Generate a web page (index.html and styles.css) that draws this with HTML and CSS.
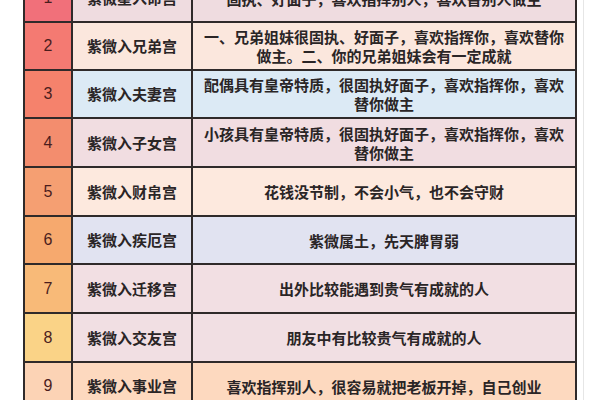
FILE: index.html
```html
<!DOCTYPE html>
<html lang="zh-CN">
<head>
<meta charset="utf-8">
<title>紫微星入十二宫</title>
<link rel="stylesheet" href="styles.css">
</head>
<body>
<div class="page">
  <div class="table">
    <div class="row r1"><div class="num">1</div><div class="name">紫微星入命宫</div><div class="desc">固执、好面子，喜欢指挥别人，喜欢替别人做主</div></div>
    <div class="row r2"><div class="num">2</div><div class="name">紫微入兄弟宫</div><div class="desc">一、兄弟姐妹很固执、好面子，喜欢指挥你，喜欢替你做主。二、你的兄弟姐妹会有一定成就</div></div>
    <div class="row r3"><div class="num">3</div><div class="name">紫微入夫妻宫</div><div class="desc">配偶具有皇帝特质，很固执好面子，喜欢指挥你，喜欢替你做主</div></div>
    <div class="row r4"><div class="num">4</div><div class="name">紫微入子女宫</div><div class="desc">小孩具有皇帝特质，很固执好面子，喜欢指挥你，喜欢替你做主</div></div>
    <div class="row r5"><div class="num">5</div><div class="name">紫微入财帛宫</div><div class="desc">花钱没节制，不会小气，也不会守财</div></div>
    <div class="row r6"><div class="num">6</div><div class="name">紫微入疾厄宫</div><div class="desc">紫微属土，先天脾胃弱</div></div>
    <div class="row r7"><div class="num">7</div><div class="name">紫微入迁移宫</div><div class="desc">出外比较能遇到贵气有成就的人</div></div>
    <div class="row r8"><div class="num">8</div><div class="name">紫微入交友宫</div><div class="desc">朋友中有比较贵气有成就的人</div></div>
    <div class="row r9"><div class="num">9</div><div class="name">紫微入事业宫</div><div class="desc">喜欢指挥别人，很容易就把老板开掉，自己创业</div></div>
  </div>
  <div class="edge"></div>
</div>
</body>
</html>
```
FILE: styles.css
```css
html, body {
  margin: 0;
  padding: 0;
  background: #ffffff;
  overflow: hidden;
}
.page {
  display: flex;
  align-items: flex-start;
  height: 400px;
  overflow: hidden;
}
.table {
  display: grid;
  grid-template-columns: 46px 118px 382px;
  grid-template-rows: 46px 46px 46px 47px 47px 46px 47px 47px 46px;
  gap: 2px;
  padding: 2px;
  background: #2f2a2a;
  margin: -27px 0 0 23px;
  font-family: "Noto Sans CJK SC", "Noto Sans", sans-serif;
  font-weight: 700;
  color: #2a2526;
  font-size: 15px;
}
.row {
  display: contents;
}
.num, .name, .desc {
  display: flex;
  align-items: center;
  justify-content: center;
  text-align: center;
}
.num {
  font-family: "Liberation Sans", Arial, sans-serif;
  font-weight: 400;
  font-size: 16px;
  color: #4a1d1d;
}
.name {
  line-height: 20px;
}
.desc {
  padding: 0 10px;
  line-height: 19px;
}
.r1 .num { background: #f1707a; }
.r2 .num { background: #f47a72; }
.r3 .num { background: #f5826c; }
.r4 .num { background: #f38d6e; }
.r5 .num { background: #f59f72; }
.r6 .num { background: #f6a96e; }
.r7 .num { background: #f8ba78; }
.r8 .num { background: #fad387; }
.r9 .num { background: #fcd3b5; }

.r1 .name, .r1 .desc { background: #efdce0; }
.r2 .name, .r2 .desc { background: #fbe7dd; }
.r3 .name, .r3 .desc { background: #dceaf5; }
.r4 .name, .r4 .desc { background: #f1dde1; }
.r5 .name, .r5 .desc { background: #fde9de; }
.r6 .name, .r6 .desc { background: #e1e3f1; }
.r7 .name, .r7 .desc { background: #f2dfe3; }
.r8 .name, .r8 .desc { background: #f1dfe3; }
.r9 .name, .r9 .desc { background: #fdd9bf; }

.edge {
  width: 1px;
  height: 400px;
  margin-left: 6px;
  background: #e6e6e6;
}
```
